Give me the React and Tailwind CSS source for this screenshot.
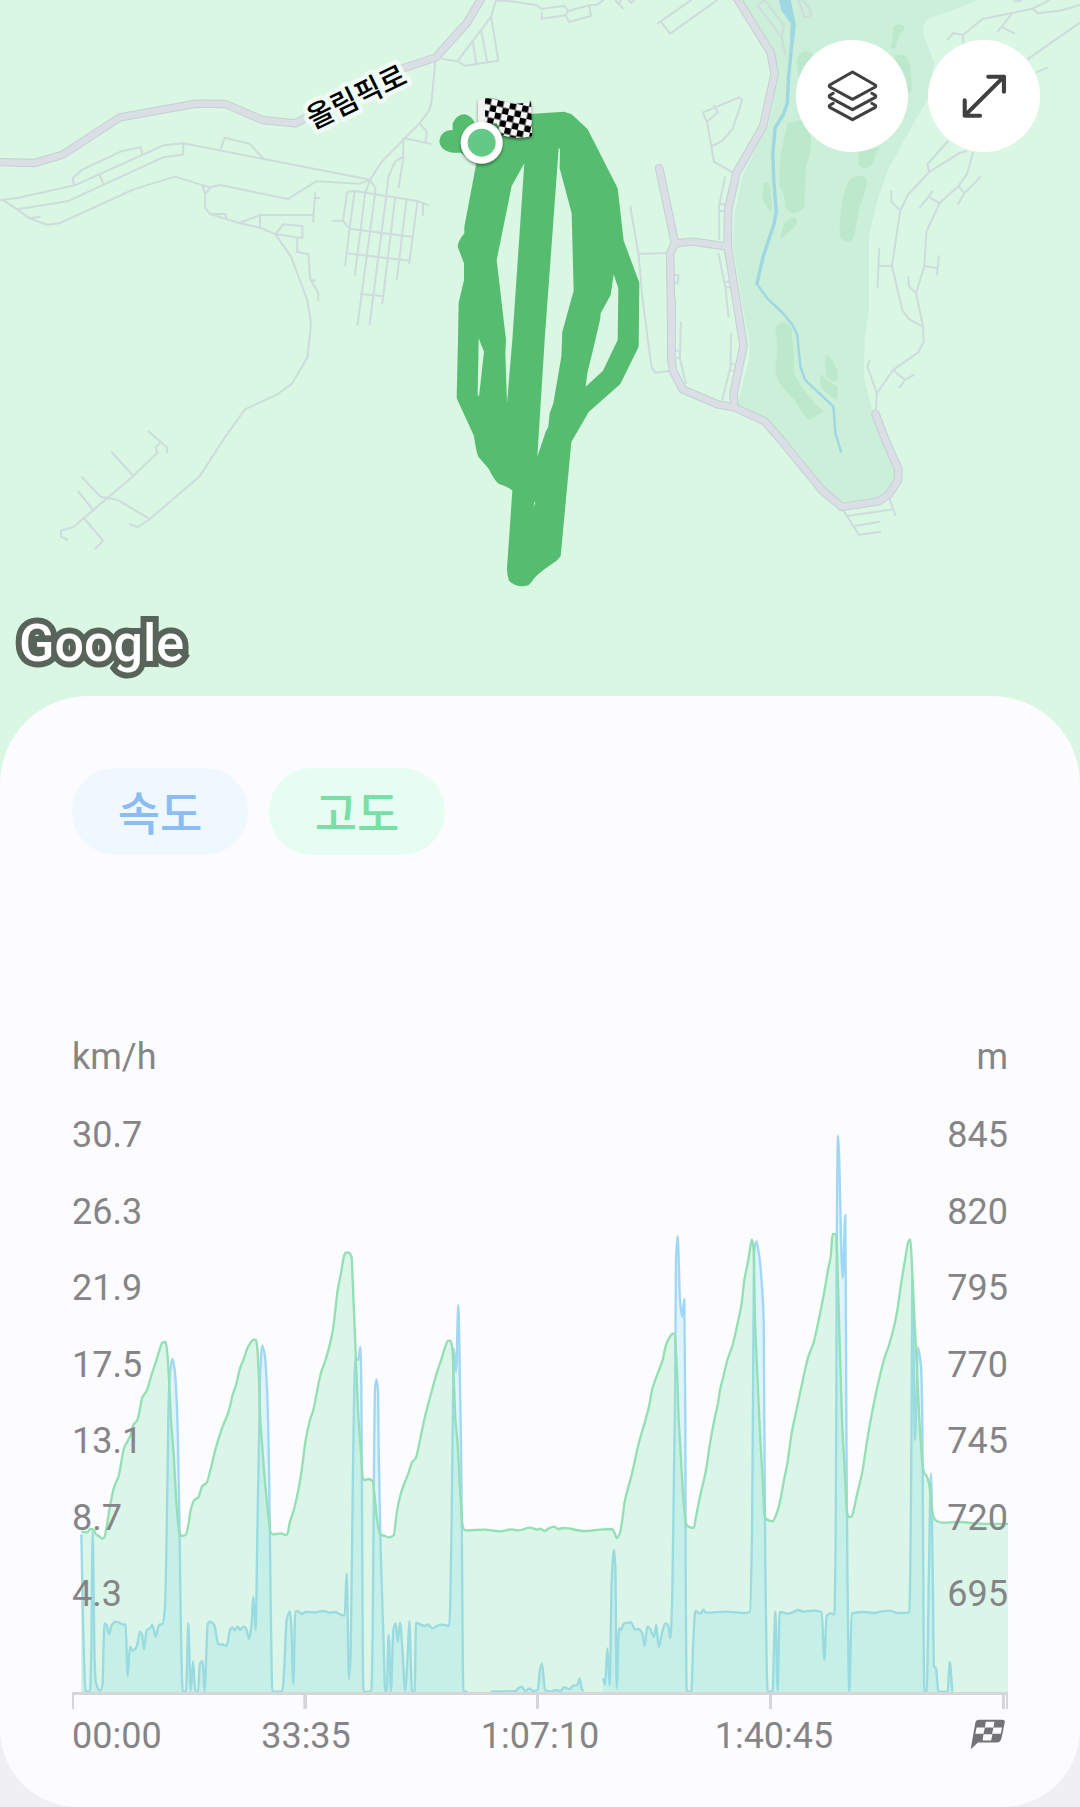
import React from "react";

/* ---------- map geometry: [dx, dy, path] ---------- */

const MAJOR_ROADS = [
  [0, 0, "M-10 486L100 489L182 464L348 352L570 311L655 312L762 360L858 370L1000 290L1170 205L1266 172L1356 68L1400 -8"],
  [1568, 0, "M568 -12L670 158L681 222L648 378L570 520L546 630L545 740L591 1037L562 1180L564 1222"],
  [1568, 0, "M346 504L392 730L378 760L382 1050"],
  [1568, 0, "M392 730L444 725L545 740"],
  [1568, 900, "M382 0L381 175L386 212L414 268L516 313L564 322L652 364L700 420L818 570L877 621L983 604L1012 584L1040 540L1040 506L1003 420L974 341"],
];

const MINOR_ROADS = [
  [0, 0, "M0 601L50 594L217 556L475 436L533 430L1075 539M215 556L211 534L240 508L352 454L408 442L414 464"],
  [0, 0, "M533 430L531 464L473 472L196 604L50 628M288 522L301 552M86 655L118 650M640 449L653 413L725 431L768 480"],
  [0, 0, "M10 601L50 628L86 655L135 674L172 670L388 568L508 530L610 562L640 555L836 597L918 544L1045 551L1075 539"],
  [0, 0, "M588 558L596 582L612 562M596 582L595 622L610 642L695 669L758 684L800 703L845 770L892 900L903 970L893 1072L847 1152L800 1186L711 1228L648 1320L580 1429L435 1557L400 1581L375 1572"],
  [0, 0, "M610 642H655L657 655M695 669L755 645H909M909 667L915 577M915 594H930M755 645V684"],
  [0, 0, "M800 703L822 673L878 678V714L800 703M863 714V756L896 763L900 836L924 878V902M900 838L916 842"],
  [0, 0, "M1264 185L1253 305L1246 332L1218 370L1107 487L1075 539L1060 580L1047 690L1030 828M1075 539L1090 565L1088 590L1075 690L1038 978"],
  [0, 0, "M1172 414L1170 470L1147 485L1128 530L1120 600L1073 975M1172 470L1157 565M1172 414L1252 432M1218 370L1240 395L1235 428"],
  [0, 0, "M1147 595L1110 912M1180 600L1152 840M1212 605L1188 792M1008 575L996 663L1015 686L1002 798M1030 573L1015 686"],
  [0, 0, "M1008 575L1030 573L1212 603L1244 616M1228 612V648M963 662H996M1015 686L1200 711M1005 760L1190 782M1045 882L1113 889"],
  [0, 0, "M1282 176L1328 184L1350 197L1447 182L1426 50L1440 2L1470 2L1556 15L1575 28M1328 184L1426 50M1372 120L1383 192M1397 90L1415 187"],
  [0, 1050, "M430 243L485 292V310M467 275L452 292L457 308L387 378L213 531L177 542V560L197 570M323 305L387 378M236 380L292 440L340 449L435 507M226 423L272 482M246 507L299 572L275 598"],
  [1568, 0, "M0 27L70 18L82 33L74 46L85 66L148 48L143 16L165 14L185 0M5 35V56L74 46M82 33L143 16M218 0L242 27M230 8L236 0M258 0L264 8L276 0M340 72L350 64L440 0M350 64L378 101L515 0"],
  [1568, 0, "M632 16L652 0L708 76L702 112L712 165M632 16L702 112M750 0L768 52L788 46L780 20L762 0"],
  [1568, 0, "M472 338L578 292L587 300L560 385Q530 430 498 438M472 338L485 365L505 485L560 518M503 315L517 337L485 365"],
  [1568, 0, "M262 618L286 762L298 900L324 1102L335 1118L380 1112M286 762L365 759M538 530L520 615V720M520 613H540M520 633H540M518 760L538 860L548 952M538 845H550M538 862H552M385 825H402L400 850H385M370 825V850"],
  [1568, 900, "M409 65L406 175L424 252M395 152H408M395 174H406M555 98L553 200L529 300M553 193H565M553 212H565"],
  [1568, 0, "M1568 68L1415 178M1440 218L1475 202M1568 15L1510 32L1445 40L1430 26L1480 0M1430 26L1285 57L1228 105L1200 99L1182 121M1228 105V130M1370 42L1328 96M1342 82L1378 100M1375 5L1400 0"],
  [1568, 0, "M1185 423L1125 492L1130 516L1068 585L1046 632L1022 798L1052 930L1072 958L1112 980L1114 1025L1098 1058L1025 1110L978 1180L975 1235"],
  [1568, 0, "M1130 516L1220 458L1240 453M1258 455L1240 522L1215 558L1160 610L1122 695L1116 798L1092 880L1112 978M1215 558L1232 580L1280 530M1232 580L1213 614M1160 610L1128 590L1140 572M1128 590L1102 624M1046 632L1020 605V571M1022 798H980M985 745L980 865M1116 798L1153 804M1158 766L1153 826M1092 880L1072 860L1069 829"],
  [1568, 900, "M978 280L950 198L958 180M1025 210L1060 240L1088 223M1060 240L1042 264M880 630L926 704L990 695M914 678L986 665M893 648L1026 628M1015 597L1032 648"],
];

const GREENS = [
  [1568, 0, "M745 180Q760 140 790 160L800 200L750 230Z"],
  [1568, 0, "M720 370Q695 460 695 520V560Q712 580 712 620Q735 660 768 620L772 500Q790 450 787 410L760 360Z"],
  [1568, 0, "M650 548Q665 540 670 570L674 635Q655 625 645 590Z"],
  [1568, 0, "M740 652Q755 670 735 685L700 718Q695 710 710 670Q725 650 740 652Z"],
  [1568, 0, "M900 540Q935 510 950 545Q945 580 928 620L912 710Q895 740 870 710Q870 580 900 540Z"],
  [1568, 0, "M925 450L985 440L965 490Q945 520 925 495Z"],
  [1568, 0, "M1025 80Q1050 65 1060 85Q1035 110 1035 140Q1025 150 1017 140Q1028 110 1025 80Z"],
  [1568, 0, "M1030 165Q1070 155 1075 200L1080 270Q1060 300 1040 250Z"],
  [1568, 900, "M683 85Q705 50 730 85Q738 150 738 220Q770 290 825 335Q800 345 783 360Q765 350 740 300Q683 250 683 200Q695 150 683 85Z"],
  [1568, 900, "M828 168Q845 160 864 215V242Q845 250 830 225Z"],
  [1568, 900, "M815 220Q830 245 864 258V300Q830 285 813 255Z"],
];

function Shapes({ items, ...props }) {
  return (
    <g {...props}>
      {items.map(([x, y, d], i) => (
        <path key={i} transform={`translate(${x} ${y})`} d={d} />
      ))}
    </g>
  );
}

function RouteMap() {
  return (
    <svg
      viewBox="0 0 1080 784"
      preserveAspectRatio="xMidYMin slice"
      className="block h-full w-full"
      role="img"
      aria-label="운동 경로 지도"
    >
      <defs>
        <pattern id="checks" width="38" height="38" patternUnits="userSpaceOnUse" patternTransform="translate(257 52) rotate(12)">
          <rect width="38" height="38" fill="#f4f4f4" />
          <path d="M0 0h19v19H0zM19 19h19v19H19z" fill="#000" />
        </pattern>
        <filter id="drop" x="-30%" y="-30%" width="160%" height="160%">
          <feDropShadow dx="0" dy="5" stdDeviation="5" floodOpacity="0.5" />
        </filter>
      </defs>

      <rect width="1080" height="784" fill="#daf7e3" />

      <g transform="scale(.34439 .33333)" fill="none" strokeLinejoin="round">
        <path
          transform="translate(1568 0)"
          fill="#cbefd8"
          d="M590 0H1270L1200 30L1130 55Q1112 65 1112 100L1145 190L1130 290L1085 370L1010 510L980 600L955 710V930L943 1010L940 1130L965 1230L974 1241L1003 1320L1040 1406V1440L1012 1484L983 1504L877 1521L818 1470L652 1264L572 1220L608 1070V1020L595 960L560 740L565 640L590 520L665 370L690 222L670 150Z"
        />
        <Shapes items={GREENS} fill="#bce9cc" />
        <g transform="translate(1568 0)">
          <path fill="#9fd7e3" d="M694 0H728L743 75L738 125L726 120L728 70L700 30Z" />
          <path
            stroke="#9fd7e3"
            strokeWidth="10"
            d="M734 100L722 230L718 310L706 345L683 382L676 460L679 545L686 635L680 670L648 770L629 855"
          />
          <path
            stroke="#9fd7e3"
            strokeWidth="7"
            d="M629 850L660 895L706 940L733 975L747 1005L756 1100L770 1140L852 1220L858 1300L875 1358"
          />
        </g>
        <Shapes items={MINOR_ROADS} stroke="#cedcde" strokeWidth="6" />
        <Shapes items={MAJOR_ROADS} stroke="#c6cfd4" strokeWidth="25" strokeLinecap="round" />
        <Shapes items={MAJOR_ROADS} stroke="#dadfe5" strokeWidth="19" strokeLinecap="round" />
      </g>

      <text
        transform="translate(361 106) rotate(-26)"
        textAnchor="middle"
        fontSize="29"
        stroke="#effbf4"
        strokeWidth="9"
        strokeLinejoin="round"
        paintOrder="stroke"
        fill="#000"
        className="font-['Noto_Sans_CJK_KR',sans-serif] font-medium"
      >
        올림픽로
      </text>

      <g transform="translate(400 80) scale(.33333)">
        <path
          fill="#56bc6f"
          fillRule="evenodd"
          d="M158 150V130Q170 103 195 103Q215 108 225 130L400 101L492 95L515 103L563 148L653 325L671 482L718 608L716 800L661 912L566 996L514 1086L482 1428L470 1442Q410 1482 400 1498Q390 1519 370 1519Q345 1520 327 1502Q320 1480 321 1465L337 1232Q325 1220 297 1212Q285 1205 265 1165L235 1130Q228 1115 222 1068L170 955L174 780L176 668L192 600V550L173 500Q173 485 193 460V440L229 250L182 218Q125 222 118 185Q122 150 158 150Z
             M373 250L335 318L290 540L318 780L316 820L321 970L337 780Z
             M476 204L480 208L479 265L515 400L521 632L487 755L484 830L460 970L449 1000L445 1040L437 1055L412 1130L434 780Z
             M641 583L655 625L653 780L609 872L557 920L562 880L586 780L600 720L602 700L632 645Z
             M236 775L252 815L237 950L233 943Z
             M401 1282L403 1264L406 1268Z"
        />
        <g filter="url(#drop)">
          <path fill="#f1f1f1" d="M234 65Q234 55 245 55H255V150H234Z" />
          <path fill="url(#checks)" d="M254 55C290 52 320 72 350 71Q375 71 393 64L396 168Q350 180 305 165L290 130H256Z" />
        </g>
        <circle cx="245" cy="188" r="63" fill="#fff" filter="url(#drop)" />
        <circle cx="245" cy="188" r="42" fill="#64c886" />
      </g>

      <text
        x="19"
        y="661"
        fontSize="52"
        stroke="#58645a"
        strokeWidth="12"
        paintOrder="stroke"
        fill="#fff"
        className="font-['Roboto',sans-serif] font-medium"
      >
        Google
      </text>
    </svg>
  );
}

function LayersIcon() {
  return (
    <svg viewBox="832 210 148 156" preserveAspectRatio="none" className="h-[52px] w-[51px]" fill="none" stroke="#404040" strokeWidth="9" strokeLinejoin="round" strokeLinecap="round">
      <path d="M906 216L972 255Q975 258 972 261L906 298L840 261Q837 258 840 255Z" />
      <path d="M850 280L840 286Q837 289 840 292L906 329L972 292Q975 289 972 286L962 280" />
      <path d="M850 310L840 316Q837 319 840 322L906 359L972 322Q975 319 972 316L962 310" />
    </svg>
  );
}

function ExpandIcon() {
  return (
    <svg viewBox="1224 222 132 132" preserveAspectRatio="none" className="h-11 w-[45px]" fill="none" stroke="#404040" strokeWidth="12" strokeLinejoin="round" strokeLinecap="round">
      <path d="M1232 347L1347 230M1301 230H1347V275M1232 301V347H1277" />
    </svg>
  );
}

function FinishIcon() {
  return (
    <svg viewBox="1169 955 107 94" className="h-[31px] w-9" role="img" aria-label="종료">
      <path fill="#737375" d="M1195 957H1265Q1276 957 1273 967L1263 1015Q1260 1026 1250 1026H1192L1170 1047L1184 966Q1186 957 1195 957Z" />
      <path fill="#fcfcfe" d="M1216 963h26l-3 18h-26zM1188 981h25l-4 19h-25zM1239 981h26l-4 19h-26zM1209 1001h27l-4 19h-26z" />
    </svg>
  );
}

/* ---------- chart data ---------- */

// Tiles of the plot; each holds samples relative to its own origin.
const TILES = { a: [120, 3060], b: [120, 4200], c: [1800, 3060], d: [1740, 4200], m: [1320, 4440] };

function samples(source) {
  return source
    .trim()
    .split(/\s+/)
    .reduce(
      (acc, token) => {
        if (TILES[token]) acc.tile = TILES[token];
        else {
          const [x, y] = token.split(",").map(Number);
          acc.points.push([x + acc.tile[0], y + acc.tile[1]]);
        }
        return acc;
      },
      { tile: TILES.a, points: [] }
    ).points;
}

function smoothPath(p) {
  const slope = p.slice(1).map(([x, y], i) => (y - p[i][1]) / Math.max(x - p[i][0], 0.5));
  const tangent = p.map((_, i) => {
    const l = slope[i - 1];
    const r = slope[i];
    if (l === undefined || r === undefined) return l ?? r;
    return l * r <= 0 ? 0 : (2 * l * r) / (l + r);
  });
  let d = `M${p[0][0]} ${p[0][1]}`;
  for (let i = 1; i < p.length; i++) {
    const h = (p[i][0] - p[i - 1][0]) / 3;
    const y1 = p[i - 1][1] + tangent[i - 1] * h;
    const y2 = p[i][1] - tangent[i] * h;
    d += `C${p[i - 1][0] + h} ${y1.toFixed(1)} ${p[i][0] - h} ${y2.toFixed(1)} ${p[i][0]} ${p[i][1]}`;
  }
  return d;
}

const ALTITUDE = samples(`
b 124,395 140,397 152,387 162,390 167,402 178,409 188,416 193,412 200,380 208,330 222,262 236,228 252,145 272,105 280,75 292,60 305,0
a 307,1132 320,1112 336,1060 350,1018 356,998 368,967 377,966 382,1000 390,1140
b 393,60 400,150 410,320 418,395 424,408 437,405 445,375 452,330 463,300 475,292 487,258 500,248 510,215 527,145 548,80 564,40 572,10
a 577,1128 588,1095 600,1045 612,1015 622,985 632,968 640,959 648,960 652,985 657,1080 661,1198
b 666,130 676,260 688,370 692,398 700,403 722,400 738,405 742,402 750,365 760,335 775,270 785,210 797,120 810,60 820,30
a 830,1120 842,1062 855,1025 877,940 885,880 893,810 903,760 913,705 918,697 926,698 935,712 938,780 945,950 955,1190
b 957,80 963,160 969,236 976,240 985,237 998,243 1003,280 1010,350 1020,402 1035,408 1046,412 1061,406 1070,340 1080,290 1090,258 1105,220 1117,185 1127,175 1140,120 1155,50
a 1172,1125 1190,1060 1205,1015 1215,982 1225,962 1232,963 1237,985 1241,1060 1246,1198
b 1252,120 1262,300 1268,378 1274,390
m 78,151 135,149 155,151 180,154 215,148 235,151 270,143 292,149 300,146 314,153 325,146 342,140 355,147 372,144 432,153 490,148 516,147 522,155 531,174 540,158 550,95
d 133,310 155,225 175,135 195,65 208,15
c 156,1110 175,1055 188,1020 198,975 210,950 217,941 224,943 227,980 232,1080 236,1198
d 298,90 303,180 312,320 318,370 325,380 341,384 348,350 360,290 377,215 390,130 403,60 414,10
c 360,1110 370,1070 382,1020 398,975 415,900 425,850 433,780 445,720 451,680 456,659 461,690 465,900 470,1020 478,1198
d 541,120 548,240 553,340 558,357 578,364 586,350 600,305 612,240 622,190 635,100 645,50
c 600,1120 625,1010 640,970 655,905 672,820 685,745 692,710 698,642 708,643 712,720 716,860 726,1198
d 789,120 795,230 801,335 806,351 815,350 822,325 832,280 847,215 860,130 872,60
c 830,1110 853,1015 867,975 882,920 892,870 902,800 915,720 925,665 931,658 936,740 942,870 950,1030 958,1198
d 1022,120 1028,200 1032,218 1040,228 1047,250 1053,300 1060,350 1070,363 1085,368 1140,366 1200,371 1284,372`);

const SPEED = [
  `b 124,403 130,700 137,875 150,875 154,750 158,395 164,780 168,850 181,872 188,850 190,760 194,670 200,675 207,703 215,675 228,665 248,673 257,674 263,828 270,740 278,752 290,740 300,695 306,703 312,748 320,690 330,685 337,675 347,710 357,675 368,672 375,620 383,200
   a 385,1180 390,1060 397,1016 404,1050 410,1140
   b 414,130 418,350 423,700 428,875 438,875 441,800 445,670 452,873 459,785 466,875 474,875 480,790 488,783 494,875 498,790 503,672 510,665 523,675 535,733 550,734 560,738 570,690 577,682 585,690 593,680 600,690 610,680 618,685 627,717 634,680 640,590 647,690 652,400 659,0
   a 661,1050 667,977 675,1010 682,1130
   b 687,200 692,600 697,875 727,875 733,800 740,660 750,634 754,680 760,852 766,634 775,634 785,642 797,636 825,637 850,633 870,638 885,636 900,643 914,647 920,520 927,837 932,760 939,200
   a 946,1015 955,1020 961,980 964,1100
   b 966,300 968,700 970,875 994,875 998,700 1002,200
   a 1005,1110 1009,1078 1014,1110
   b 1016,150 1022,450 1030,700 1036,875 1040,875 1046,705 1053,875 1060,690 1067,670 1073,725 1080,668 1088,760 1095,873 1103,770 1108,664 1116,875 1124,875 1128,668 1140,673 1155,678 1162,673 1178,685 1190,678 1210,674 1228,678 1235,350 1239,0
   a 1241,985 1248,1055 1255,855 1260,1100
   b 1264,200 1267,600 1270,875 1282,875`,
  `m 152,635 228,633 235,625 245,620 255,633 268,626 280,633 293,630 300,570 306,550 315,630 335,635 345,630 362,633 372,622 388,628 400,617 412,615 419,595 426,630 431,631`,
  `d 69,835 75,853 82,745 89,856 95,550 102,450 106,500 110,865 117,685 123,690 132,670 153,667 165,688 175,687 187,700 194,738 202,680 210,686 222,710 229,675 236,742 247,695 256,670 264,675 271,715 277,580 285,0
   c 228,720 233,648 240,840 246,890 253,838 256,1198
   d 317,500 320,875 334,875 340,720 346,633 361,641 370,629 378,638 440,635 495,639 510,635 516,400 519,0
   c 462,700 469,664 478,710 488,830 491,900 493,1198
   d 556,500 563,875 578,875 582,740 586,635 593,873 599,636 625,641 640,636 655,630 670,635 700,632 725,636 733,780 740,648 752,640 763,644 767,400 769,0
   c 710,700 714,346 728,775 736,585 739,1198
   d 802,500 808,875 815,640 850,636 885,639 905,634 930,632 950,639 988,638 993,300 995,0
   c 937,770 945,1260 954,982 963,1040 967,1198
   d 1029,400 1033,875 1040,875 1047,500 1053,220 1058,500 1062,800 1068,805 1075,875 1103,875 1109,785 1117,875`,
].map(samples);

const BASE = 5077;
const area = (p) => `${smoothPath(p)}V${BASE}H${p[0][0]}Z`;

function Plot() {
  return (
    <svg
      viewBox="216 3345 2808 1782"
      preserveAspectRatio="none"
      className="block h-[594px] w-full [grid-area:1/1]"
      fill="none"
      strokeLinejoin="round"
      role="img"
      aria-label="속도 및 고도 그래프"
    >
      {SPEED.map((p, i) => (
        <g key={i}>
          <path d={area(p)} fill="#dff3fc" />
          <path d={smoothPath(p)} stroke="#a1d7f4" strokeWidth="7" />
        </g>
      ))}
      <path d={area(ALTITUDE)} fill="#86e7af" fillOpacity="0.28" />
      <path d={smoothPath(ALTITUDE)} stroke="#92e0b3" strokeWidth="7" />
      <g fill="#d6d6d8">
        <path d="M216 5076H3024V5085H216Z" />
        <path d="M216 5085h6v42h-6zM910 5085h11v42h-11zM1608 5085h9v42h-9zM2307 5085h9v42h-9zM3006 5085h9v42h-9zM3018 5085h6v42h-6z" />
      </g>
    </svg>
  );
}

const SPEED_TICKS = ["30.7", "26.3", "21.9", "17.5", "13.1", "8.7", "4.3"];
const ALTITUDE_TICKS = ["845", "820", "795", "770", "745", "720", "695"];

function AxisLabels({ ticks, className }) {
  return (
    <ul className={`flex flex-col justify-between ${className}`}>
      {ticks.map((t) => (
        <li key={t}>{t}</li>
      ))}
    </ul>
  );
}

export default function App() {
  return (
    <main className="flex min-h-screen flex-col bg-[#f0f0f2] font-['Roboto','Noto_Sans_CJK_KR',sans-serif]">
      <section className="relative h-[784px] w-full overflow-hidden bg-[#daf7e3]">
        <RouteMap />
        <div className="absolute top-10 right-10 flex gap-5">
          <button type="button" aria-label="지도 유형" className="flex size-28 items-center justify-center rounded-full bg-white">
            <LayersIcon />
          </button>
          <button type="button" aria-label="전체 화면" className="flex size-28 items-center justify-center rounded-full bg-white">
            <ExpandIcon />
          </button>
        </div>
      </section>

      <section className="relative -mt-[88px] flex-1 rounded-t-[88px] rounded-b-[78px] bg-[#fcfcfe] px-[72px] pt-[72px] pb-[51px]">
        <div className="flex gap-[21px] font-['Noto_Sans_CJK_KR',sans-serif] text-[46px] leading-none font-medium">
          <button type="button" className="flex h-[87px] w-44 items-center justify-center rounded-full bg-[#f0f8ff] pb-1 text-[#8bbdf3]">
            속도
          </button>
          <button type="button" className="flex h-[87px] w-44 items-center justify-center rounded-full bg-[#e6fef1] pb-1 text-[#7adfa6]">
            고도
          </button>
        </div>

        <div className="mt-[182px] text-[36px] leading-10 text-[#858587]">
          <div className="flex justify-between">
            <span>km/h</span>
            <span>m</span>
          </div>

          <div className="mt-[38px] grid grid-cols-1">
            <Plot />
            <div className="flex h-[499px] justify-between [grid-area:1/1]">
              <AxisLabels ticks={SPEED_TICKS} className="text-left" />
              <AxisLabels ticks={ALTITUDE_TICKS} className="text-right" />
            </div>
          </div>

          <div className="mt-[7px] grid grid-cols-[1fr_2fr_2fr_2fr_1fr] text-center">
            <span className="text-left">00:00</span>
            <span>33:35</span>
            <span>1:07:10</span>
            <span>1:40:45</span>
            <span className="flex items-center justify-end pr-0.5 pb-1">
              <FinishIcon />
            </span>
          </div>
        </div>
      </section>
    </main>
  );
}
